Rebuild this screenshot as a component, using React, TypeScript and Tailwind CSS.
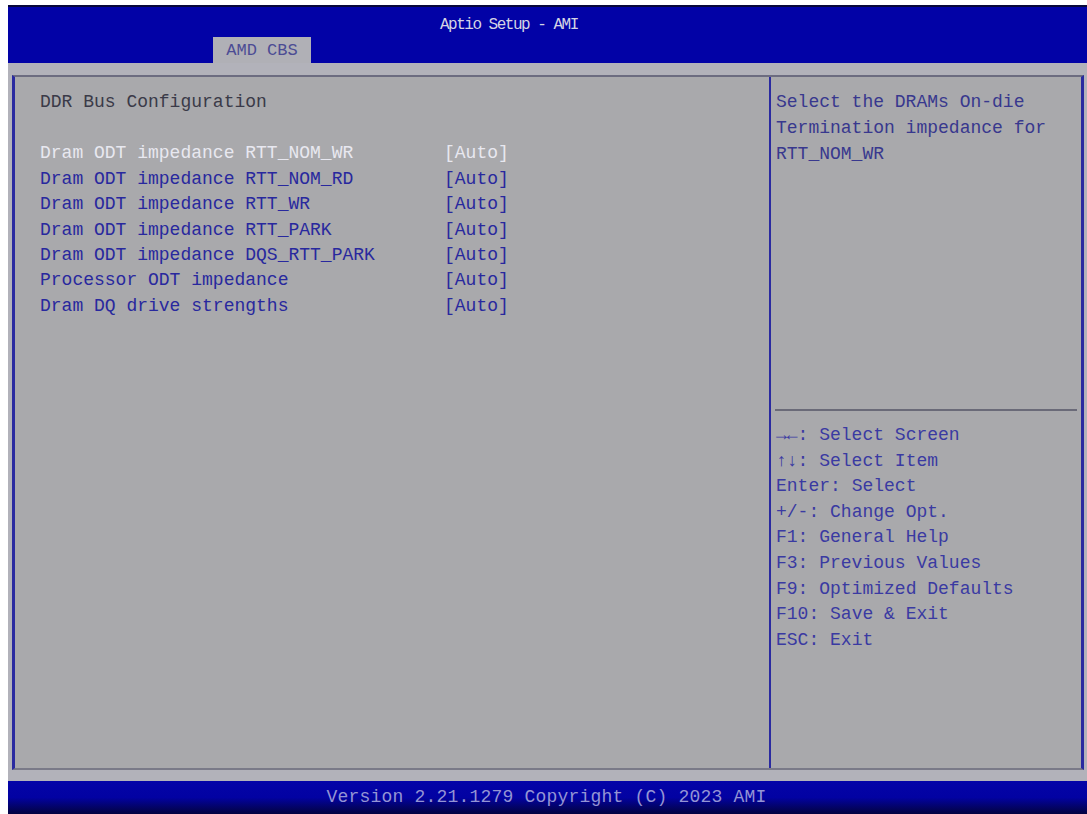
import React from "react";

const items = [
  "Dram ODT impedance RTT_NOM_WR",
  "Dram ODT impedance RTT_NOM_RD",
  "Dram ODT impedance RTT_WR",
  "Dram ODT impedance RTT_PARK",
  "Dram ODT impedance DQS_RTT_PARK",
  "Processor ODT impedance",
  "Dram DQ drive strengths",
];

const keys: [string, string][] = [
  ["→←:", "Select Screen"],
  ["↑↓:", "Select Item"],
  ["Enter:", "Select"],
  ["+/-:", "Change Opt."],
  ["F1:", "General Help"],
  ["F3:", "Previous Values"],
  ["F9:", "Optimized Defaults"],
  ["F10:", "Save & Exit"],
  ["ESC:", "Exit"],
];

export default function App() {
  return (
    <div className="w-[1087px] h-[814px] bg-white pt-[5px] pl-[8px] overflow-hidden font-['Liberation_Mono',monospace] text-[18px]">
      <div className="flex flex-col h-full">
        {/* Title bar */}
        <div className="h-[58px] bg-[#0202a6] border-t-2 border-[#08083a] pt-[9px]">
          <div className="h-[18px] leading-[18px] pl-[432px] text-[16px] tracking-[-1.5px] text-[#d4d4e4]">Aptio Setup - AMI</div>
          <div className="mt-[3px] ml-[205px] w-[98px] h-[26px] bg-[#b0b0b6] text-[#4c4c94] text-[17px] leading-[27px] text-center">
            AMD CBS
          </div>
        </div>

        {/* Body */}
        <div className="flex-1 bg-[#b2b2ba] pt-[12px] pl-[4px] pr-[3px] pb-[11px]">
          <div className="flex h-full bg-[#a9a9ac] border-l-[3px] border-r-[3px] border-l-[#2a2aa0] border-r-[#2a2aa0] border-t-2 border-b-2 border-t-[#6c6c80] border-b-[#7a7a88]">
            {/* Left column */}
            <div className="w-[754px] pl-[25px] pt-[13px] leading-[25.4px]">
              <div className="text-[#3a3a48]">DDR Bus Configuration</div>
              <div className="h-[26px]" />
              {items.map((label, i) => (
                <div key={label} className={`flex ${i === 0 ? "text-[#e8e8f0]" : "text-[#28289e]"}`}>
                  <span className="w-[404px] whitespace-pre">{label}</span>
                  <span>[Auto]</span>
                </div>
              ))}
            </div>

            {/* Divider */}
            <div className="w-[2px] bg-[#2a2aa0]" />

            {/* Right column */}
            <div className="flex-1 flex flex-col">
              <div className="h-[332px] pl-[5px] pt-[13px] leading-[25.8px] text-[#38388e]">
                <div>Select the DRAMs On-die</div>
                <div>Termination impedance for</div>
                <div>RTT_NOM_WR</div>
              </div>
              <div className="mx-[4px] h-[2px] bg-[#6a6a78]" />
              <div className="pl-[5px] pt-[12px] leading-[25.6px] text-[#3a3aa2]">
                {keys.map(([k, v]) => (
                  <div key={k} className="whitespace-pre">
                    {k} {v}
                  </div>
                ))}
              </div>
            </div>
          </div>
        </div>

        {/* Footer */}
        <div className="h-[33px] bg-gradient-to-b from-[#0404a8] via-[#0202a2] to-[#020240] flex items-start justify-center pt-[4px]">
          <span className="text-[#9494d4] text-[18px] tracking-[0.2px] leading-[24px] pr-[2px]">Version 2.21.1279 Copyright (C) 2023 AMI</span>
        </div>
      </div>
    </div>
  );
}
